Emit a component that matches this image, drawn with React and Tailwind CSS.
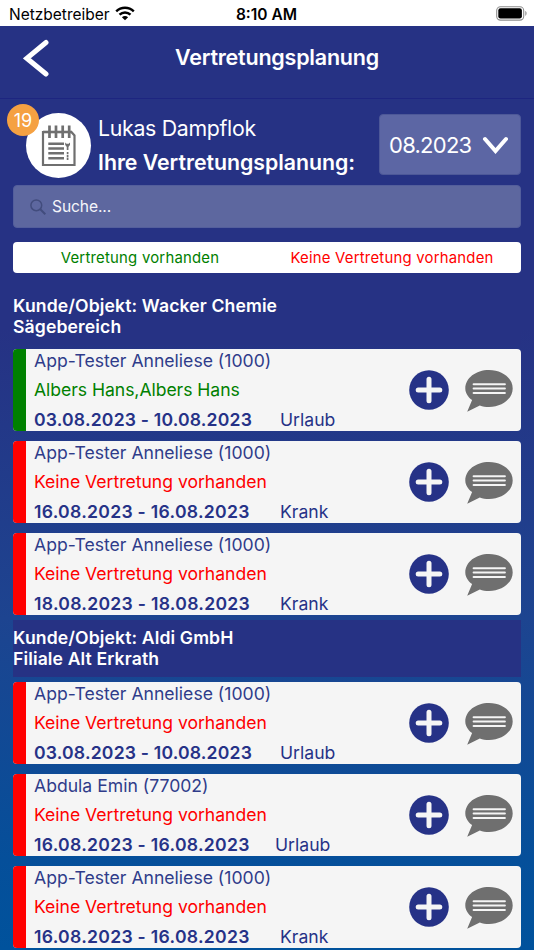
import React from "react";

const cards1 = [
  { name: "App-Tester Anneliese (1000)", sub: "Albers Hans,Albers Hans", date: "03.08.2023 - 10.08.2023", type: "Urlaub", ok: true },
  { name: "App-Tester Anneliese (1000)", date: "16.08.2023 - 16.08.2023", type: "Krank", wide: true },
  { name: "App-Tester Anneliese (1000)", date: "18.08.2023 - 18.08.2023", type: "Krank", wide: true },
];
const cards2 = [
  { name: "App-Tester Anneliese (1000)", date: "03.08.2023 - 10.08.2023", type: "Urlaub" },
  { name: "Abdula Emin (77002)", date: "16.08.2023 - 16.08.2023", type: "Urlaub", near: true, wide: true },
  { name: "App-Tester Anneliese (1000)", date: "16.08.2023 - 16.08.2023", type: "Krank", wide: true },
];

function WifiIcon() {
  return (
    <svg className="ml-[5px] h-[15px] w-[20px]" viewBox="0 0 20 15" fill="none" stroke="#000" strokeWidth="2.4">
      <path d="M1.2 5.3C6.2.5 13.8.5 18.8 5.3" />
      <path d="M4.5 8.7c3.1-3 7.9-3 11 0" />
      <path d="M6.9 11.2c1.8-1.7 4.4-1.7 6.2 0L10 14.3z" fill="#000" stroke="none" />
    </svg>
  );
}

function BatteryIcon() {
  return (
    <svg className="h-[15px] w-[32px]" viewBox="0 0 32 15">
      <rect x="0.7" y="0.7" width="27" height="13.4" rx="3.8" fill="none" stroke="#8d8d8d" strokeWidth="1.1" />
      <rect x="2.3" y="2.3" width="23.6" height="10.2" rx="2.2" fill="#000" />
      <path d="M29.3 5c1.7.7 1.7 4 0 4.8z" fill="#8d8d8d" />
    </svg>
  );
}

function NotepadIcon() {
  return (
    <svg className="h-[42px] w-[36px]" viewBox="0 0 36 42" fill="none" stroke="#6f6f6f">
      <path d="M2 7h28.500l3 3.500v29.500h-31.500z" strokeWidth="2.200" />
      <path d="M2 7h29" strokeWidth="2.600" />
      <path d="M8.500 0.500v12.500M15 0.500v12.500M21.700 0.500v12.500M28.200 0.500v12.500" strokeWidth="2.700" />
      <path d="M7.300 18.700h15.700M7.300 23.500h15.700M7.300 28.300h15.700M7.300 33.300h15.700" strokeWidth="2.400" />
      <path d="M24.200 17.500l1.300 1.200h2.200l1.300-1.200v2.400l-1.700 2h-1.400l-1.700-2z" fill="#6f6f6f" stroke="none" />
      <path d="M26.600 21.500v3.500M26.600 27v2.200M26.600 30v2.200M26.600 32.800v2.200" strokeWidth="1.700" />
    </svg>
  );
}

function PlusIcon() {
  return (
    <svg className="h-10 w-10 shrink-0" viewBox="0 0 40 40">
      <circle cx="20" cy="20" r="19.800" fill="#263287" />
      <path d="M20 9.200v21.600M9.200 20h21.600" stroke="#f5f5f5" strokeWidth="5" strokeLinecap="round" />
    </svg>
  );
}

function CommentIcon() {
  return (
    <svg className="h-[42px] w-[48px] shrink-0" viewBox="0 0 48 42">
      <path d="M24 0C37.200 0 47.700 8.200 47.700 18.400S37.200 36.900 24 36.900c-3.300 0-6.400-.5-9.200-1.500L2.200 41.800l4.900-11.800C3 27 .3 22.900.3 18.400.3 8.200 10.800 0 24 0z" fill="#6f6f6f" />
      <path d="M8.600 14.200h31.300M8.600 18.600h31.300M8.600 22.900h31.300" stroke="#f5f5f5" strokeWidth="2" strokeLinecap="round" />
    </svg>
  );
}

function Card({ c }) {
  return (
    <div className="flex h-[82px] shrink-0 overflow-hidden rounded-[4px] bg-[#f5f5f5]">
      <div className={c.ok ? "w-[13px] bg-[#008000]" : "w-[13px] bg-[#ff0000]"} />
      <div className="-mt-[3px] flex h-[90px] flex-1 flex-col pl-2 text-[17.600px] leading-[30px] whitespace-nowrap text-[#263287]">
        <div className="h-[29px] text-[#2f3c8a]">{c.name}</div>
        <div className={c.ok ? "-tracking-[0.05px] text-[#008000]" : "-tracking-[0.020px] text-[#ff0000]"}>{c.sub || "Keine Vertretung vorhanden"}</div>
        <div className="flex">
          <div className={c.near ? "w-[241px] font-semibold" : "w-[246px] font-semibold"}>
            <span className={c.wide ? "tracking-[0.280px]" : "tracking-[0.180px]"}>{c.date}</span>
          </div>
          <div>{c.type}</div>
        </div>
      </div>
      <div className="flex items-start gap-[16px] pr-2 pt-[21px]">
        <PlusIcon />
        <CommentIcon />
      </div>
    </div>
  );
}

function GroupTitle({ a, b }) {
  return (
    <div className="h-[57px] shrink-0 bg-[#263284] pt-[7px] text-[17.600px] leading-[21px] font-semibold tracking-[0.120px] whitespace-nowrap text-white">
      <div>{a}</div>
      <div>{b}</div>
    </div>
  );
}

export default function App() {
  return (
    <div className="flex h-[950px] w-[534px] flex-col overflow-hidden bg-[#263284] font-[Inter,sans-serif]">
      <div className="grid h-[26px] shrink-0 grid-cols-3 items-center bg-white text-[15.500px] text-black">
        <div className="flex items-center pl-[9px] whitespace-nowrap">
          <span className="pt-[2px]">Netzbetreiber</span>
          <WifiIcon />
        </div>
        <div className="pt-[3px] pr-[1px] text-center font-semibold">8:10 AM</div>
        <div className="flex justify-end pr-[6px]">
          <BatteryIcon />
        </div>
      </div>

      <div className="grid h-[73px] shrink-0 grid-cols-[100px_1fr_80px] border-b border-[#1d2580] text-white">
        <svg className="mt-[13px] ml-[23px] h-[38px] w-[27px]" viewBox="0 0 27 38" fill="none" stroke="#fff" strokeWidth="5">
          <path d="M23 3.500L3.800 19.300l19.200 15.700" strokeLinecap="round" />
        </svg>
        <div className="pt-[15px] pl-[75px] text-[21.500px] leading-[32px] font-semibold -tracking-[0.220px] whitespace-nowrap">Vertretungsplanung</div>
      </div>

      <div className="flex min-h-0 flex-1 flex-col bg-[linear-gradient(180deg,#263284_0px,#263284_230px,#1d4490_520px,#054f9a_760px,#00529c_851px)] px-[13px]">
        <div className="flex h-[86px] shrink-0">
          <div className="relative mt-[14px] ml-[13px] flex h-[65px] w-[65px] items-center justify-center rounded-full bg-white">
            <NotepadIcon />
            <div className="absolute -top-[9px] -left-[19px] flex h-8 w-8 items-center justify-center rounded-full bg-[#f5a142] text-[18px] text-white">19</div>
          </div>
          <div className="mt-[12px] ml-[7px] flex-1 text-[21.300px] leading-[34px] whitespace-nowrap text-white">
            <div className="-tracking-[0.300px]">Lukas Dampflok</div>
            <div className="font-semibold -tracking-[0.020px]">Ihre Vertretungsplanung:</div>
          </div>
          <div className="mt-[15px] flex h-[61px] w-[142px] items-center justify-between rounded-[4px] border border-[#4d5898] bg-[#5c66a4] pr-[12px] pl-[9px] text-[22px] text-white">
            <span className="-tracking-[0.750px] pt-[2px]">08.2023</span>
            <svg className="h-[18px] w-[26px]" viewBox="0 0 26 18" fill="none" stroke="#fff" strokeWidth="4">
              <path d="M3 3L13.500 15 24 3" strokeLinecap="round" />
            </svg>
          </div>
        </div>

        <div className="flex h-[43px] shrink-0 items-center rounded-[4px] border border-[#535e9c] bg-[#5d679f] pl-4 text-[15.600px] -tracking-[0.100px] text-[#f4f5fa]">
          <svg className="mr-[6px] h-4 w-4" viewBox="0 0 16 16" fill="none" stroke="#424c7d" strokeWidth="1.500">
            <circle cx="6.300" cy="6.300" r="5.400" />
            <path d="M10.300 10.300l5 5" strokeWidth="2" />
          </svg>
          Suche...
        </div>

        <div className="mt-[14px] grid h-[31px] shrink-0 grid-cols-2 items-center rounded-[4px] bg-white pt-[1px] text-center text-[14.900px] tracking-[0.220px] whitespace-nowrap">
          <div className="text-[#008000]">Vertretung vorhanden</div>
          <div className="pr-[4px] text-[#ff0000]">Keine Vertretung vorhanden</div>
        </div>

        <div className="mt-[15px] flex flex-col">
          <GroupTitle a="Kunde/Objekt: Wacker Chemie" b="Sägebereich" />
          <div className="mt-[4px] flex flex-col gap-[10px]">
            {cards1.map((c, i) => <Card key={i} c={c} />)}
          </div>
        </div>
        <div className="mt-[5px] flex flex-col">
          <GroupTitle a="Kunde/Objekt: Aldi GmbH" b="Filiale Alt Erkrath" />
          <div className="mt-[5px] flex flex-col gap-[10px]">
            {cards2.map((c, i) => <Card key={i} c={c} />)}
          </div>
        </div>
      </div>
    </div>
  );
}
